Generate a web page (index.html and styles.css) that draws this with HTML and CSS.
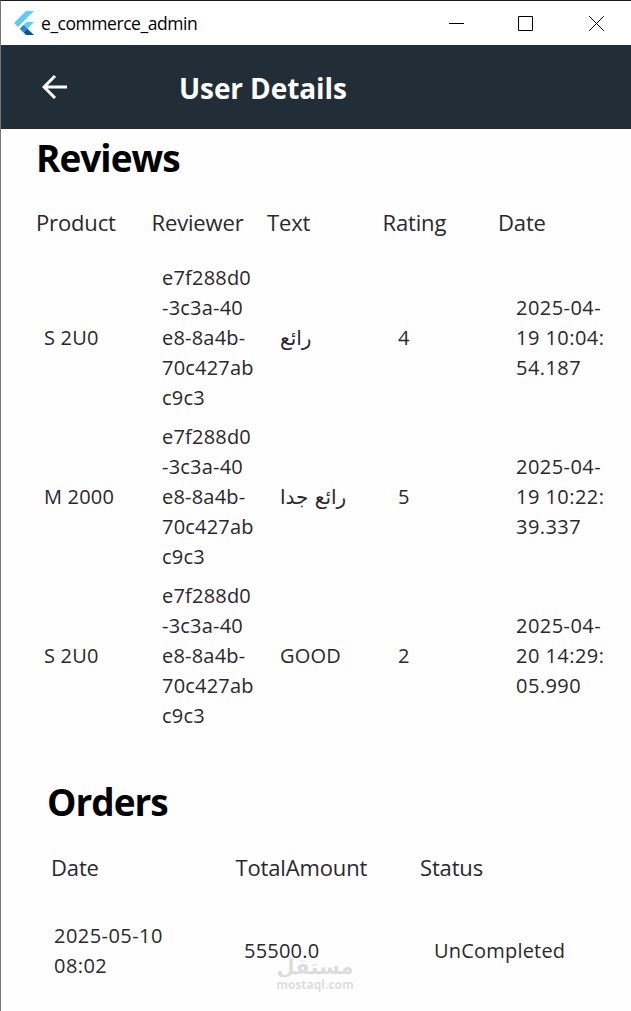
FILE: index.html
```
<!DOCTYPE html>
<html lang="en">
<head>
    <meta charset="UTF-8">
    <meta name="viewport" content="width=device-width, initial-scale=1.0">
    <title>e_commerce_admin</title>
    <link rel="stylesheet" href="styles.css">
</head>
<body>
    <div class="window">
        <div class="titlebar">
            <svg class="logo" width="20" height="24" viewBox="0 0 20 24">
                <path d="M12 0h8L4 16l-4-4z" fill="#5fc9f8"/>
                <path d="M12.5 11H20l-7 7 -3.5 3.5L5.8 17.7z" fill="#5fc9f8"/>
                <path d="M5.8 17.7l3.8-3.7 3.9 3.8-3.9 3.8z" fill="#2f86c4"/>
                <path d="M9.6 21.6l3.9-3.8L20 24h-8z" fill="#01579b"/>
            </svg>
            <span class="app-name">e_commerce_admin</span>
            <div class="controls">
                <svg width="15" height="15" viewBox="0 0 15 15"><path d="M0 7.5h15"/></svg>
                <svg width="15" height="15" viewBox="0 0 15 15"><path d="M.5 .5h14v14H.5z"/></svg>
                <svg width="15" height="15" viewBox="0 0 15 15"><path d="M.2 .2l14.6 14.6M14.8 .2L.2 14.8"/></svg>
            </div>
        </div>

        <header class="appbar">
            <svg class="back" width="26" height="24" viewBox="0 0 26 24">
                <path d="M13 1L2 12l11 11M2.5 12H25"/>
            </svg>
            <h1>User Details</h1>
        </header>

        <section class="reviews">
            <h2>Reviews</h2>
            <div class="row head">
                <span>Product</span><span>Reviewer</span><span>Text</span><span>Rating</span><span>Date</span>
            </div>
            <div class="row item">
                <div>S 2U0</div>
                <div>e7f288d0<br>-3c3a-40<br>e8-8a4b-<br>70c427ab<br>c9c3</div>
                <div class="arabic" lang="ar">رائع</div>
                <div>4</div>
                <div class="date">2025-04-<br>19 10:04:<br>54.187</div>
            </div>
            <div class="row item">
                <div>M 2000</div>
                <div>e7f288d0<br>-3c3a-40<br>e8-8a4b-<br>70c427ab<br>c9c3</div>
                <div class="arabic" lang="ar">رائع جدا</div>
                <div>5</div>
                <div class="date">2025-04-<br>19 10:22:<br>39.337</div>
            </div>
            <div class="row item">
                <div>S 2U0</div>
                <div>e7f288d0<br>-3c3a-40<br>e8-8a4b-<br>70c427ab<br>c9c3</div>
                <div>GOOD</div>
                <div>2</div>
                <div class="date">2025-04-<br>20 14:29:<br>05.990</div>
            </div>
        </section>

        <section class="orders">
            <h2>Orders</h2>
            <div class="row head">
                <span>Date</span><span>TotalAmount</span><span>Status</span>
            </div>
            <div class="row item">
                <div class="date">2025-05-10<br>08:02</div>
                <div>55500.0</div>
                <div>UnCompleted</div>
            </div>
        </section>

        <div class="watermark">
            <span class="mark-ar" lang="ar">مستقل</span>
            <span class="mark-en">mostaql.com</span>
        </div>
    </div>
</body>
</html>
```

FILE: styles.css
```
* {
    box-sizing: border-box;
}

body {
    margin: 0;
    font-family: "Open Sans", "Noto Sans", "DejaVu Sans", sans-serif;
    color: #2a282d;
    background: #fefefe;
}

.window {
    position: relative;
    height: 1011px;
    overflow: hidden;
    border-top: 1px solid #1c1a22;
    border-left: 1px solid #777;
}

.titlebar {
    display: flex;
    align-items: center;
    height: 44px;
    padding-left: 13px;
    background: #fff;
}

.app-name {
    margin-left: 7px;
    font-size: 17.5px;
    letter-spacing: -0.45px;
    color: #000;
}

.controls {
    display: flex;
    gap: 56px;
    margin-left: auto;
    margin-right: 27px;
}

.controls svg {
    fill: none;
    stroke: #000;
    stroke-width: 1;
}

.controls svg:first-child {
    margin-right: -2px;
}

.appbar {
    display: flex;
    align-items: center;
    height: 84px;
    padding-left: 41px;
    background: #212e37;
    color: #fff;
}

.back {
    fill: none;
    stroke: #fff;
    stroke-width: 3;
}

h1 {
    margin: 2px 0 0 111px;
    font-size: 28px;
    font-weight: 700;
    letter-spacing: -0.1px;
}

h2 {
    margin: 0;
    font-size: 37px;
    line-height: 50px;
    font-weight: 700;
    letter-spacing: -1px;
    color: #000;
}

.row {
    display: grid;
    align-items: center;
}

.head {
    font-size: 22px;
    line-height: 30px;
    letter-spacing: -0.15px;
}

.item {
    font-size: 20px;
    line-height: 30px;
    letter-spacing: 0.2px;
    white-space: nowrap;
}

.date {
    letter-spacing: 0.45px;
}

.reviews {
    padding: 4px 0 0 35px;
}

.reviews .head {
    grid-template-columns: repeat(5, 115.5px);
    margin: 24px 0 26px;
}

.reviews .item {
    grid-template-columns: 118px 118px 118px 118px 1fr;
    padding-left: 8px;
    margin-bottom: 9px;
}

.arabic {
    font-family: "DejaVu Sans", sans-serif;
    font-size: 20px;
    letter-spacing: 0;
}

.orders {
    padding: 37px 0 0 46px;
}

.orders .head {
    grid-template-columns: repeat(3, 184.5px);
    margin: 25px 0 39px;
    padding-left: 4px;
}

.orders .item {
    grid-template-columns: 190px 190px 1fr;
    padding-left: 7px;
}

.watermark {
    position: absolute;
    left: 275px;
    top: 955px;
    display: flex;
    flex-direction: column;
    width: 78px;
    color: rgba(120, 120, 120, 0.25);
    font-weight: 700;
    text-align: center;
}

.mark-ar {
    font-family: "DejaVu Sans", sans-serif;
    font-size: 21px;
    line-height: 22px;
}

.mark-en {
    font-size: 12px;
    line-height: 13px;
}
```
